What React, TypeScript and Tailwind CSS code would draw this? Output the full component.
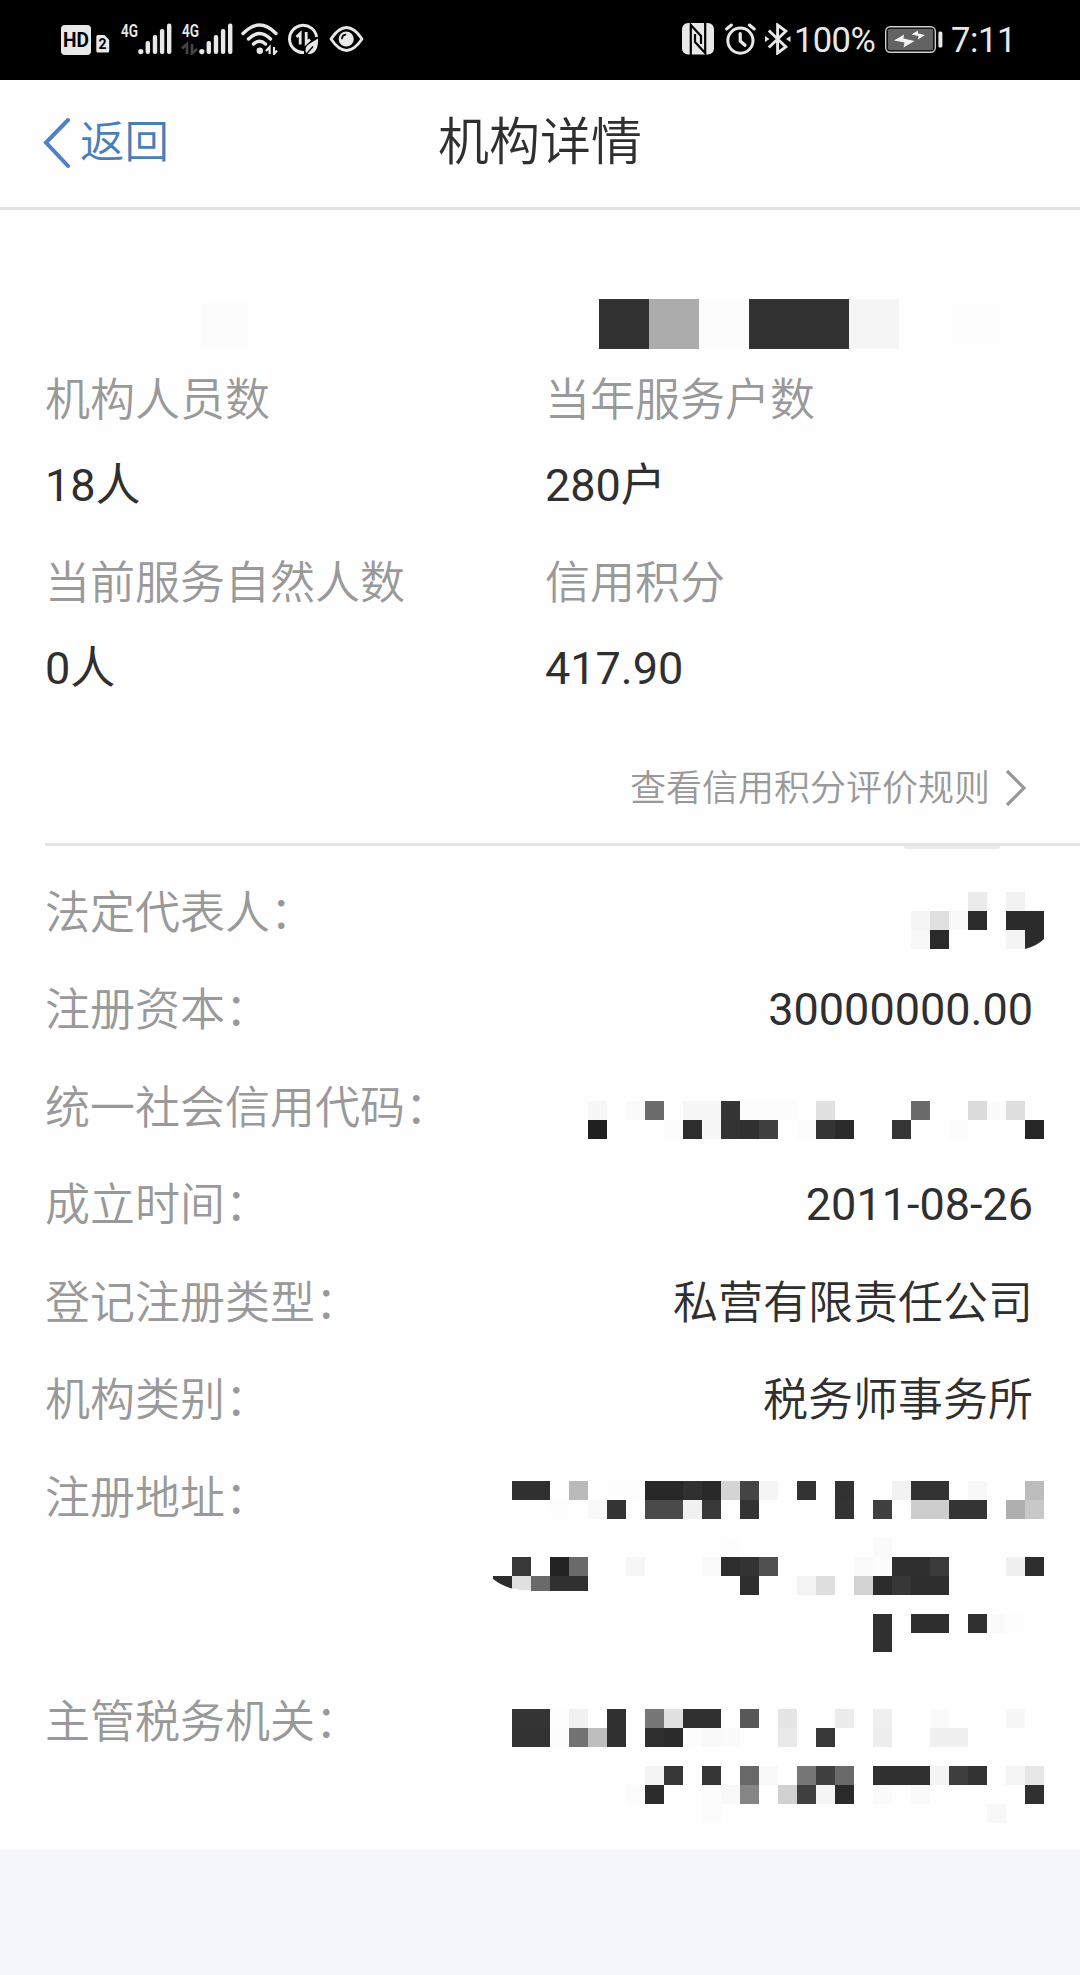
import React from 'react';

type Cell = [col: number, row: number, color: string, span?: number];

const CELL = 19;

// Censored values are drawn as a pixel mosaic
const Mosaic: React.FC<{
  cols: number;
  rows: number;
  cells: Cell[];
  size?: number;
  className?: string;
  children?: React.ReactNode;
}> = ({ cols, rows, cells, size = CELL, className = '', children }) => (
  <svg
    width={cols * size}
    height={rows * size}
    shapeRendering="crispEdges"
    className={`shrink-0 ${className}`}
  >
    {cells.map(([col, row, color, span = 1]) => (
      <rect
        key={`${col}-${row}`}
        x={col * size}
        y={row * size}
        width={span * size}
        height={size}
        fill={color}
      />
    ))}
    {children}
  </svg>
);

const nameCells: Cell[] = [
  [0, 0, '#323232'],
  [1, 0, '#acacac'],
  [2, 0, '#fcfcfc'],
  [3, 0, '#323232', 2],
  [5, 0, '#f5f5f5'],
];

const legalCells: Cell[] = [
  [3, 0, '#ebebeb'],
  [5, 0, '#f2f2f2'],
  [0, 1, '#f5f5f5'],
  [1, 1, '#e0e0e0'],
  [2, 1, '#f9f9f9'],
  [3, 1, '#2c2c2c'],
  [5, 1, '#2b2b2b', 2],
  [0, 2, '#f8f8f8'],
  [1, 2, '#2a2a2a'],
  [5, 2, '#f4f4f4'],
];

const codeCells: Cell[] = [
  [0, 0, '#f7f7f7'],
  [2, 0, '#fafafa'],
  [3, 0, '#6c6c6c'],
  [5, 0, '#f7f7f7', 2],
  [7, 0, '#353535'],
  [8, 0, '#fcfcfc', 3],
  [12, 0, '#e1e1e1'],
  [17, 0, '#6a6a6a'],
  [20, 0, '#dbdbdb'],
  [21, 0, '#fbfbfb'],
  [22, 0, '#dedede'],
  [0, 1, '#202020'],
  [4, 1, '#fcfcfc'],
  [5, 1, '#2d2d2d'],
  [6, 1, '#f7f7f7'],
  [7, 1, '#333333'],
  [8, 1, '#303030'],
  [9, 1, '#404040'],
  [11, 1, '#fcfcfc'],
  [12, 1, '#343434'],
  [13, 1, '#2b2b2b'],
  [16, 1, '#363636'],
  [19, 1, '#fcfcfc'],
  [23, 1, '#262626'],
];

const addressCells: Cell[] = [
  [1, 0, '#303030', 2],
  [4, 0, '#bababa'],
  [6, 0, '#fdfdfd', 2],
  [8, 0, '#282828', 2],
  [10, 0, '#303030'],
  [11, 0, '#292929'],
  [12, 0, '#d4d4d4'],
  [13, 0, '#444444'],
  [14, 0, '#f5f5f5'],
  [16, 0, '#333333'],
  [18, 0, '#323232'],
  [21, 0, '#f2f2f2'],
  [22, 0, '#333333', 2],
  [25, 0, '#f8f8f8'],
  [28, 0, '#bcbcbc'],
  [3, 1, '#fdfdfd'],
  [5, 1, '#f9f9f9'],
  [6, 1, '#343434'],
  [8, 1, '#4a4a4a', 2],
  [10, 1, '#f1f1f1'],
  [11, 1, '#383838'],
  [13, 1, '#333333'],
  [18, 1, '#333333'],
  [20, 1, '#404040'],
  [22, 1, '#cdcdcd', 2],
  [24, 1, '#343434', 2],
  [27, 1, '#afafaf'],
  [28, 1, '#c8c8c8'],
  [12, 3, '#fdfdfd'],
  [20, 3, '#fafafa'],
  [1, 4, '#383838'],
  [3, 4, '#232323'],
  [4, 4, '#6a6a6a'],
  [7, 4, '#f6f6f6'],
  [11, 4, '#fafafa'],
  [12, 4, '#2d2d2d'],
  [13, 4, '#333333'],
  [14, 4, '#505050'],
  [19, 4, '#fafafa'],
  [20, 4, '#fcfcfc'],
  [21, 4, '#2f2f2f', 2],
  [23, 4, '#3b3b3b'],
  [27, 4, '#f0f0f0'],
  [28, 4, '#2d2d2d'],
  [13, 5, '#2e2e2e'],
  [16, 5, '#f3f3f3'],
  [17, 5, '#dedede'],
  [19, 5, '#d2d2d2'],
  [20, 5, '#2c2c2c'],
  [21, 5, '#373737'],
  [22, 5, '#2e2e2e', 2],
  [20, 7, '#303030'],
  [22, 7, '#2e2e2e', 2],
  [25, 7, '#303030'],
  [26, 7, '#fafafa'],
  [27, 7, '#fdfdfd'],
  [20, 8, '#303030'],
];

const taxCells: Cell[] = [
  [0, 0, '#353535', 2],
  [2, 0, '#fdfdfd'],
  [3, 0, '#f1f1f1'],
  [5, 0, '#303030'],
  [7, 0, '#777777'],
  [8, 0, '#e1e1e1'],
  [9, 0, '#303030', 2],
  [12, 0, '#585858'],
  [14, 0, '#e5e5e5'],
  [17, 0, '#ececec'],
  [19, 0, '#efefef'],
  [22, 0, '#fbfbfb'],
  [26, 0, '#f7f7f7'],
  [0, 1, '#333333', 2],
  [2, 1, '#fcfcfc'],
  [3, 1, '#727272'],
  [4, 1, '#bebebe'],
  [5, 1, '#303030'],
  [7, 1, '#2f2f2f'],
  [8, 1, '#2a2a2a'],
  [9, 1, '#fcfcfc'],
  [10, 1, '#f9f9f9'],
  [11, 1, '#fbfbfb'],
  [14, 1, '#e9e9e9'],
  [16, 1, '#383838'],
  [19, 1, '#ededed'],
  [22, 1, '#f0f0f0', 2],
  [7, 3, '#f4f4f4'],
  [8, 3, '#373737'],
  [10, 3, '#363636'],
  [12, 3, '#686868'],
  [13, 3, '#f9f9f9'],
  [15, 3, '#777777'],
  [16, 3, '#404040'],
  [17, 3, '#6a6a6a'],
  [19, 3, '#303030', 3],
  [22, 3, '#f4f4f4'],
  [23, 3, '#3e3e3e'],
  [24, 3, '#333333'],
  [26, 3, '#f5f5f5'],
  [27, 3, '#e7e7e7'],
  [6, 4, '#fcfcfc'],
  [7, 4, '#2c2c2c'],
  [10, 4, '#fcfcfc'],
  [11, 4, '#f9f9f9'],
  [12, 4, '#858585'],
  [14, 4, '#d1d1d1'],
  [15, 4, '#404040'],
  [16, 4, '#f5f5f5'],
  [17, 4, '#2a2a2a'],
  [19, 4, '#fbfbfb'],
  [21, 4, '#fafafa'],
  [27, 4, '#303030'],
  [10, 5, '#fcfcfc'],
  [25, 5, '#f8f8f8'],
];

const SignalBars: React.FC = () => (
  <svg width="34" height="32" viewBox="0 0 34 32" fill="#e8e8e8">
    <circle cx="2.8" cy="28.6" r="2.6" />
    <rect x="7.6" y="18" width="4.4" height="13" rx="2" />
    <rect x="14.8" y="12" width="4.4" height="19" rx="2" />
    <rect x="21.9" y="6" width="4.4" height="25" rx="2" />
    <rect x="29" y="0.5" width="4.4" height="30.5" rx="2" />
  </svg>
);

const NetworkLabel: React.FC<{ arrows?: boolean }> = ({ arrows }) => (
  <svg className="-mt-2 -mr-[12px]" width="32" height="40" viewBox="0 -8 32 40">
    <text
      x="1"
      y="14"
      fontSize="18.5"
      fontWeight="600"
      fill="#e8e8e8"
      textLength="17"
      lengthAdjust="spacingAndGlyphs"
    >
      4G
    </text>
    {arrows && (
      <path
        d="M1 25.5L6 21V31M6 22V31M11 21V30.5L16 26"
        fill="none"
        stroke="#444"
        strokeWidth="2.6"
      />
    )}
  </svg>
);

const StatusBar: React.FC = () => (
  <div className="flex h-20 items-start bg-black pr-[64px] pl-[61px] font-['Roboto',sans-serif] text-[#e8e8e8]">
    <svg className="mt-[25px]" width="30" height="30" viewBox="0 0 30 30">
      <rect width="30" height="30" rx="4" fill="#e8e8e8" />
      <text
        x="2"
        y="22"
        fontSize="19.5"
        fontWeight="700"
        textLength="26"
        lengthAdjust="spacingAndGlyphs"
      >
        HD
      </text>
    </svg>
    <svg className="mt-[35px] ml-[5px]" width="14" height="18" viewBox="0 0 14 18">
      <path d="M2 0H8.5L13.2 5V16Q13.2 17.5 11.7 17.5H1.8Q.3 17.5 .3 16V1.8Q.3 0 2 0Z" fill="#e8e8e8" />
      <text x="2.6" y="14.2" fontSize="14" fontWeight="700">
        2
      </text>
    </svg>
    <div className="mt-[23px] ml-[10px] flex">
      <NetworkLabel />
      <div className="-ml-[2px]">
        <SignalBars />
      </div>
    </div>
    <div className="mt-[23px] ml-[9px] flex">
      <NetworkLabel arrows />
      <div className="-ml-[2px]">
        <SignalBars />
      </div>
    </div>
    {/* wifi */}
    <svg className="mt-[23px] ml-[8px]" width="38" height="32" viewBox="0 0 38 32" fill="none" stroke="#e8e8e8" strokeWidth="3.4" strokeLinecap="round">
      <path d="M2 10.5Q18.5 -6.5 35 10.5" />
      <path d="M7.5 16Q18.5 5 29.5 16" />
      <path d="M12.5 21Q18.5 15.5 24.5 21" />
      <circle cx="18.8" cy="27.8" r="3.2" fill="#e8e8e8" stroke="none" />
      <path d="M25 28L28.6 24V31M33 24V31L36 27.5" strokeWidth="2.2" strokeLinecap="butt" />
    </svg>
    {/* data saver */}
    <svg className="mt-[23px] ml-[9px]" width="31" height="32" viewBox="0 0 31 32" fill="none" stroke="#e8e8e8" strokeWidth="3">
      <path d="M16 29.5A13.6 13.6 0 1 1 28.6 14" />
      <path d="M8.5 14L12.2 10.5V21.5M18.2 9V20L22 16.5" strokeWidth="2.8" />
      <path d="M30 15.5C30.5 24 28 31 21 31Q17.5 31 17.5 27.5C17.5 21 24 20 30 15.5Z" fill="#e8e8e8" stroke="none" />
      <path d="M18 31.5L25 23.5" stroke="#000" strokeWidth="1.4" />
    </svg>
    {/* eye comfort */}
    <svg className="mt-[26px] ml-[10px]" width="35" height="26" viewBox="0 0 35 26">
      <path d="M2 13Q17.5 -10 33 13Q17.5 36 2 13Z" fill="none" stroke="#e8e8e8" strokeWidth="2.8" strokeLinejoin="round" />
      <circle cx="17.2" cy="13" r="7.6" fill="#e8e8e8" />
      <path d="M13 12.5Q13.3 9 16.5 8.7" fill="none" stroke="#000" strokeWidth="1.7" strokeLinecap="round" />
    </svg>

    {/* nfc */}
    <svg className="mt-[23px] ml-auto" width="32" height="32" viewBox="0 0 32 32">
      <rect width="32" height="31.6" rx="6" fill="#e8e8e8" />
      <path d="M8.8 33V2L19 13V21" fill="none" stroke="#000" strokeWidth="2.2" />
      <path d="M23.2 -1V30L13 19V11" fill="none" stroke="#000" strokeWidth="2.2" />
    </svg>
    {/* alarm */}
    <svg className="mt-[23px] ml-[11px]" width="31" height="32" viewBox="0 0 31 32" fill="none" stroke="#e8e8e8" strokeWidth="3" strokeLinecap="round" strokeLinejoin="round">
      <circle cx="15.4" cy="17.6" r="12.6" />
      <path d="M15.2 10.5V18L20 22.3" strokeWidth="3.2" />
      <path d="M1.6 6L6.4 2M24.4 2L29.2 6" />
    </svg>
    {/* bluetooth */}
    <svg className="mt-[23px] ml-[9px]" width="26" height="32" viewBox="0 0 26 32" fill="none" stroke="#e8e8e8" strokeWidth="2.9">
      <path d="M3.8 7.5L20.8 23.8L12.6 30V2L20.8 8.2L3.8 24.5" />
      <path d="M0 13L4.5 16L0 19ZM25.5 13L21 16L25.5 19Z" fill="#e8e8e8" stroke="none" />
    </svg>
    <span className="ml-[3px] text-[34.5px] leading-[81px] tracking-[-0.6px]">100%</span>
    <svg className="mt-[26px] ml-[10px]" width="59" height="28" viewBox="0 0 59 28">
      <rect x="0.7" y="0.7" width="49.6" height="25.6" rx="4.5" fill="none" stroke="#cfcfcf" strokeWidth="1.4" />
      <rect x="2.8" y="2.8" width="45.4" height="21.4" rx="2" fill="#636363" />
      <path d="M9 14.5L19 8.5L18.5 12.5L29.5 15L18.5 21.5L19.5 16.5ZM26.5 8.5L33 4.5L33 7.5L40 9L33 13.5L33.5 10Z" fill="#f2f2f2" />
      <rect x="53.4" y="5.5" width="4" height="16" rx="1.5" fill="#e8e8e8" />
    </svg>
    <span className="ml-[7px] text-[34.5px] leading-[81px] tracking-[-0.4px]">7:11</span>
  </div>
);

const Stat: React.FC<{ label: string; value: string }> = ({ label, value }) => (
  <div className="h-[183px] leading-[86px]">
    <div className="h-[86px] pt-px font-[350] text-[#999999]">{label}</div>
    <div>{value}</div>
  </div>
);

const Field: React.FC<{ label: string; className?: string; children: React.ReactNode }> = ({
  label,
  className = 'h-[97.5px]',
  children,
}) => (
  <div className={`flex items-start justify-between ${className}`}>
    <span className="pt-[1.5px] font-[350] text-[#999999]">{label}</span>
    {children}
  </div>
);

const App: React.FC = () => {
  return (
    <div className="flex h-[1975px] w-[1080px] flex-col overflow-hidden bg-[#f4f6fb] font-['Roboto','Noto_Sans_CJK_SC',sans-serif] text-[45px] text-[#2f2f2f]">
      <StatusBar />

      <header className="grid h-[130px] grid-cols-3 items-center border-b-[3px] border-[#e2e2e2] bg-[#fefefe] leading-[124px]">
        <a className="flex items-center pb-[2px] pl-[42px] text-[44.5px] font-[350] text-[#477fb8]">
          <svg width="28" height="60" viewBox="0 0 28 60" fill="none" stroke="#4f80c8" strokeWidth="4" className="mr-[10px] mb-[3px]">
            <path d="M26 9L4 31.5L26 55" strokeLinecap="round" />
          </svg>
          返回
        </a>
        <h1 className="pb-[2px] text-center text-[51px] font-[350]">机构详情</h1>
      </header>

      <main className="h-[1640px] bg-[#fefefe]">
        <div className="flex pt-[89px]">
          <div className="mt-1 ml-[201px] h-[45px] w-[47px] bg-[#fcfcfc]" />
          <Mosaic cols={6} rows={1} size={50} cells={nameCells} className="ml-[351px]" />
          <div className="mt-1 ml-[53px] h-[40px] w-[47px] bg-[#fdfdfd]" />
        </div>

        <section className="mt-[8px] ml-[45px] grid grid-cols-[500px_1fr]">
          <Stat label="机构人员数" value="18人" />
          <Stat label="当年服务户数" value="280户" />
          <Stat label="当前服务自然人数" value="0人" />
          <Stat label="信用积分" value="417.90" />
        </section>

        <a className="ml-[45px] flex h-[123px] items-center justify-end border-b-[3px] border-[#e4e4e4] pt-[10px] pr-[53px] text-[36px] leading-[112px] font-[350] text-[#999999]">
          <span className="pt-[2px]">查看信用积分评价规则</span>
          <svg width="22" height="40" viewBox="0 0 22 40" fill="none" stroke="#999" strokeWidth="3.2" className="ml-[15px]">
            <path d="M2 3L19 20L2 37" />
          </svg>
        </a>
        <div className="mr-[80px] ml-auto h-[3px] w-[96px] rounded-b-full bg-[#ececec]" />

        <section className="pt-[14px] pr-[36px] pl-[45px] leading-[97.5px]">
          <Field label="法定代表人：">
            <Mosaic cols={7} rows={3} cells={legalCells} className="mt-[29px]">
              <path d="M114 38H133V47Q126 54 114 57Z" fill="#2b2b2b" shapeRendering="auto" />
            </Mosaic>
          </Field>
          <Field label="注册资本：">
            <span className="mr-[11px]">30000000.00</span>
          </Field>
          <Field label="统一社会信用代码：">
            <Mosaic cols={24} rows={2} cells={codeCells} className="mt-[43px]" />
          </Field>
          <Field label="成立时间：">
            <span className="mr-[11px]">2011-08-26</span>
          </Field>
          <Field label="登记注册类型：">
            <span className="mr-[11px] pt-[1.5px] font-[350]">私营有限责任公司</span>
          </Field>
          <Field label="机构类别：">
            <span className="mr-[11px] pt-[1.5px] font-[350]">税务师事务所</span>
          </Field>
          <Field label="注册地址：" className="h-[224px]">
            <Mosaic cols={29} rows={9} cells={addressCells} className="mt-[33px]">
              <path d="M0 95H19V107.5Q9 105 0 98Z" fill="#2c2c2c" shapeRendering="auto" />
              <path d="M19 95H38V109.5Q28 109.5 19 107.5Z" fill="#e0e0e0" />
              <rect x="38" y="95" width="19" height="14.5" fill="#6a6a6a" />
              <rect x="57" y="95" width="38" height="14.5" fill="#303030" />
            </Mosaic>
          </Field>
          <Field label="主管税务机关：" className="h-[178px]">
            <Mosaic cols={28} rows={6} cells={taxCells} className="mt-[37px]" />
          </Field>
        </section>
      </main>
    </div>
  );
};

export default App;
